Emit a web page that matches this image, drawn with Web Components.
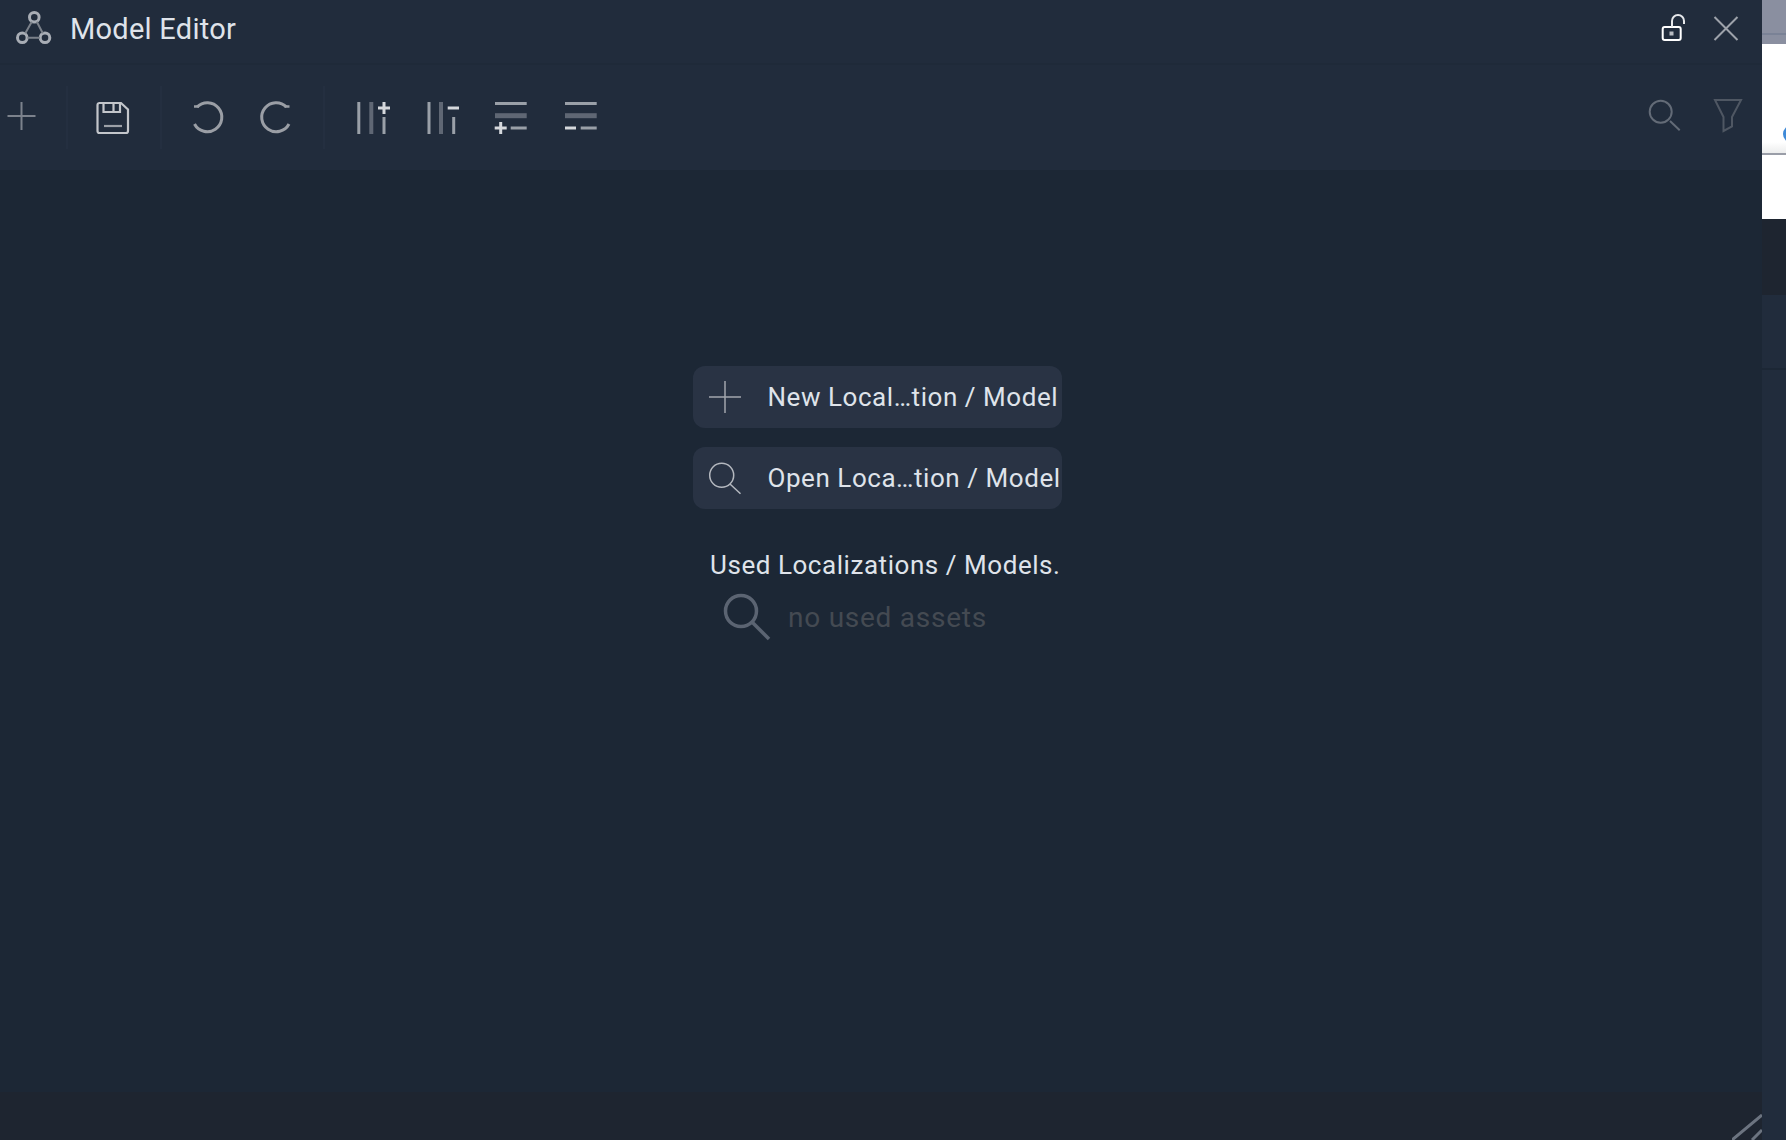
<!DOCTYPE html>
<html>
<head>
<meta charset="utf-8">
<title>Model Editor</title>
<style>
  html, body { margin: 0; height: 100%; background: #1c2735; }
  body { font-family: Roboto, "Liberation Sans", sans-serif; overflow: hidden; }
</style>
</head>
<body>
<desktop-shell>
  <editor-window>
    <title-bar slot="title" heading="Model Editor"></title-bar>
    <editor-toolbar slot="toolbar"></editor-toolbar>
    <start-panel slot="body"></start-panel>
  </editor-window>
  <side-strip slot="strip"></side-strip>
</desktop-shell>

<script>
// Shared icon set, all 34x34 boxes unless a size is passed
const ICONS = {
  plus: `<path d="M17.5 1v28M3.5 15h28" stroke="#7c828c" stroke-width="2"/>`,
  save: `<g stroke="#c3c6cb" stroke-width="2.2"><path d="M3.5 2H25l7 6.5V30a2 2 0 0 1-2 2H3.5a2 2 0 0 1-2-2V4a2 2 0 0 1 2-2z"/><path d="M7.5 2v9H24V2M17.5 2v9"/><path d="M8 25h18" stroke="#9ca0a7"/></g>`,
  undo: `<g stroke="#9a9ea5" stroke-width="3"><path d="M6 6A14.500 14.500 0 1 1 3.500 23"/><path d="M3 5.500h5" stroke-width="2.500"/></g>`,
  redo: `<g stroke="#9a9ea5" stroke-width="3" transform="matrix(-1 0 0 1 33.500 0)"><path d="M6 6A14.500 14.500 0 1 1 3.500 23"/><path d="M3 5.500h5" stroke-width="2.500"/></g>`,
  colAdd: `<path d="M2.800 1v32M28 16v17" stroke="#9aa0a8" stroke-width="3"/><path d="M15.300 1v32" stroke="#5f6774" stroke-width="4"/><path d="M28 1v12M22 7h12" stroke="#d5d8dc" stroke-width="3"/>`,
  colRemove: `<path d="M4 1v32M28.700 16v17" stroke="#9aa0a8" stroke-width="3"/><path d="M16 1v32" stroke="#5f6774" stroke-width="4"/><path d="M22.700 7H34" stroke="#d5d8dc" stroke-width="3"/>`,
  rowAdd: `<path d="M1 2.500h31.700M16.700 27h16" stroke="#9aa0a8" stroke-width="3"/><path d="M1 14.700h31.700" stroke="#5f6774" stroke-width="5"/><path d="M6.700 21v12M.7 27h12" stroke="#d5d8dc" stroke-width="3"/>`,
  rowRemove: `<path d="M2 2.500h31.700M17.700 27h16" stroke="#9aa0a8" stroke-width="3"/><path d="M2 14.700h31.700" stroke="#5f6774" stroke-width="5"/><path d="M2 27h11" stroke="#d5d8dc" stroke-width="3"/>`,
  find: `<g stroke="#636b77" stroke-width="2"><circle cx="13.700" cy="10.700" r="11"/><path d="M23 20l9.700 9.300"/></g>`,
  filter: `<path d="M4 -1h26L21 16v9.500l-8.500 4.500V16z" stroke="#4f5763" stroke-width="2"/>`,
  lock: `<rect x="2.700" y="12" width="18" height="13" rx="2" stroke="#fff" stroke-width="2"/><rect x="9.500" y="16.500" width="4" height="4" fill="#b9bcc2"/><path d="M12 12V6a6 6 0 0 1 12 0v3" stroke="#e6e8eb" stroke-width="2"/>`,
  close: `<path d="M2.500 2l23 23M25.500 2l-23 23" stroke="#9da2aa" stroke-width="2"/>`,
  logo: `<g stroke="#a8adb5" stroke-width="3"><circle cx="18.300" cy="6.300" r="4.800"/><circle cx="6.300" cy="26.700" r="4.800"/><circle cx="29" cy="26.700" r="4.800"/><path d="M15.800 10.700l-6.500 11.500M20.800 10.700l6 11.500M11.300 26.700h12.700" stroke="#7b818a" stroke-width="2"/></g>`,
  newItem: `<path d="M16 0v32M0 16h32" stroke="#a2a6ad" stroke-width="1.500"/>`,
  openItem: `<g stroke="#b4b8bf" stroke-width="1.500"><circle cx="12.700" cy="13.300" r="12"/><path d="M21 22l10.500 9.700"/></g>`,
  emptySearch: `<g stroke="#5b6472" stroke-width="3.500"><circle cx="18" cy="17" r="15.500"/><path d="M29 28l17 17"/></g>`
};

class AppIcon extends HTMLElement {
  connectedCallback() {
    const size = this.getAttribute('size') || 34;
    const root = this.attachShadow({ mode: 'open' });
    root.innerHTML = `
      <style>
        :host { display: block; width: ${size}px; height: ${size}px; flex: none; }
        svg { display: block; overflow: visible; fill: none; }
      </style>
      <svg width="${size}" height="${size}" viewBox="0 0 ${size} ${size}">${ICONS[this.getAttribute('name')] || ''}</svg>
    `;
  }
}

class DesktopShell extends HTMLElement {
  constructor() {
    super();
    this.attachShadow({ mode: 'open' }).innerHTML = `
      <style>
        :host { display: flex; width: 1786px; height: 1140px; }
        ::slotted([slot=strip]) { flex: none; }
      </style>
      <slot></slot>
      <slot name="strip"></slot>
    `;
  }
}

class EditorWindow extends HTMLElement {
  constructor() {
    super();
    this.attachShadow({ mode: 'open' }).innerHTML = `
      <style>
        :host { display: flex; flex-direction: column; width: 1762px; height: 1140px; background: #1c2735; flex: none; }
        .body { flex: 1; min-height: 0; }
        footer { height: 48px; background: #1e2530; position: relative; overflow: hidden; }
        .grip { position: absolute; right: 0; bottom: 0; }
      </style>
      <slot name="title"></slot>
      <slot name="toolbar"></slot>
      <div class="body"><slot name="body"></slot></div>
      <footer>
        <svg class="grip" width="30" height="26" viewBox="0 0 30 26" fill="none" stroke="#6c7480" stroke-width="3">
          <path d="M0 26L30 1M20 26L30 16"/>
        </svg>
      </footer>
    `;
  }
}

class TitleBar extends HTMLElement {
  constructor() {
    super();
    this.attachShadow({ mode: 'open' }).innerHTML = `
      <style>
        :host {
          display: flex; align-items: center; box-sizing: border-box;
          height: 65px; padding: 0 22px 6px 16px;
          background: #212c3c; border-bottom: 2px solid #1f2a39;
        }
        .heading { margin-left: 18px; font-size: 29px; letter-spacing: 0.25px; color: #dfe3ea; }
        .actions { margin-left: auto; display: flex; gap: 24px; }
      </style>
      <app-icon name="logo" size="36"></app-icon>
      <span class="heading"></span>
      <div class="actions">
        <app-icon name="lock" size="28"></app-icon>
        <app-icon name="close" size="28"></app-icon>
      </div>
    `;
  }
  connectedCallback() {
    this.shadowRoot.querySelector('.heading').textContent = this.getAttribute('heading');
  }
}

class ToolGroup extends HTMLElement {
  constructor() {
    super();
    this.attachShadow({ mode: 'open' }).innerHTML = `
      <style>
        :host {
          display: flex; align-items: center; height: 63px; box-sizing: border-box;
          border-right: 2px solid #242f40;
        }
        :host([last]) { border-right: 0; }
      </style>
      <slot></slot>
    `;
  }
}

class EditorToolbar extends HTMLElement {
  constructor() {
    super();
    this.attachShadow({ mode: 'open' }).innerHTML = `
      <style>
        :host {
          display: flex; align-items: center; box-sizing: border-box;
          height: 105px; background: #212c3c; padding-right: 17px;
        }
        .push { margin-left: auto; display: flex; gap: 30px; }
      </style>
      <tool-group style="padding:0 28px 0 4px"><app-icon name="plus"></app-icon></tool-group>
      <tool-group style="padding:0 30px 0 28px"><app-icon name="save"></app-icon></tool-group>
      <tool-group style="padding:0 30px 0 29px;gap:34px">
        <app-icon name="undo"></app-icon>
        <app-icon name="redo"></app-icon>
      </tool-group>
      <tool-group last style="padding-left:31px;gap:35px">
        <app-icon name="colAdd"></app-icon>
        <app-icon name="colRemove"></app-icon>
        <app-icon name="rowAdd"></app-icon>
        <app-icon name="rowRemove"></app-icon>
      </tool-group>
      <div class="push">
        <app-icon name="find"></app-icon>
        <app-icon name="filter"></app-icon>
      </div>
    `;
  }
}

class ActionButton extends HTMLElement {
  connectedCallback() {
    this.attachShadow({ mode: 'open' }).innerHTML = `
      <style>
        :host {
          display: flex; align-items: center; box-sizing: border-box;
          width: 369px; height: 62px; padding-left: 16px;
          background: #293344; border-radius: 12px; overflow: hidden;
          color: #dfe3ea; font-size: 26px; letter-spacing: 0.55px; white-space: nowrap;
        }
        .label { margin-left: 26.500px; }
      </style>
      <app-icon name="${this.getAttribute('icon')}" size="32"></app-icon>
      <span class="label"><slot></slot></span>
    `;
  }
}

class StartPanel extends HTMLElement {
  constructor() {
    super();
    this.attachShadow({ mode: 'open' }).innerHTML = `
      <style>
        :host { display: block; padding: 196px 0 0 693px; }
        .stack { display: flex; flex-direction: column; gap: 19px; width: 369px; }
        .used { margin: 39px 0 0 17px; font-size: 26px; letter-spacing: 0.55px; line-height: 34px; color: #dfe3ea; white-space: nowrap; }
        .empty { display: flex; align-items: center; margin: 12px 0 0 30px; }
        .empty span { margin-left: 18px; font-size: 28px; letter-spacing: 0.75px; color: #444a52; white-space: nowrap; }
      </style>
      <div class="stack">
        <action-button icon="newItem">New Local…tion / Model</action-button>
        <action-button icon="openItem">Open Loca…tion / Model</action-button>
      </div>
      <div class="used">Used Localizations / Models.</div>
      <div class="empty">
        <app-icon name="emptySearch" size="47"></app-icon>
        <span>no used assets</span>
      </div>
    `;
  }
}

// The bit of the window behind the editor, showing along the right edge
class SideStrip extends HTMLElement {
  constructor() {
    super();
    this.attachShadow({ mode: 'open' }).innerHTML = `
      <style>
        :host { display: block; width: 24px; height: 1140px; position: relative; overflow: hidden; background: #212c3c; }
        .tab { height: 44px; box-sizing: border-box; background: #8a8fa0; padding-top: 33px; }
        .tab i { display: block; height: 2px; background: #7a8296; }
        .page { height: 111px; box-sizing: border-box; background: linear-gradient(#fff 90%, #eceded); border-bottom: 2px solid #9a9ea8; }
        .gap { height: 64px; background: #fff; }
        .dark { height: 76px; background: #1e2530; }
        .mid { height: 73px; }
        .rule { height: 2px; background: #1c2735; }
        .dot { position: absolute; left: 21px; top: 125px; width: 18px; height: 18px; border-radius: 50%; background: #3f8ad8; }
      </style>
      <div class="tab"><i></i></div>
      <div class="page"></div>
      <div class="gap"></div>
      <div class="dark"></div>
      <div class="mid"></div>
      <div class="rule"></div>
      <div class="dot"></div>
    `;
  }
}

customElements.define('app-icon', AppIcon);
customElements.define('desktop-shell', DesktopShell);
customElements.define('editor-window', EditorWindow);
customElements.define('title-bar', TitleBar);
customElements.define('tool-group', ToolGroup);
customElements.define('editor-toolbar', EditorToolbar);
customElements.define('action-button', ActionButton);
customElements.define('start-panel', StartPanel);
customElements.define('side-strip', SideStrip);
</script>
</body>
</html>
